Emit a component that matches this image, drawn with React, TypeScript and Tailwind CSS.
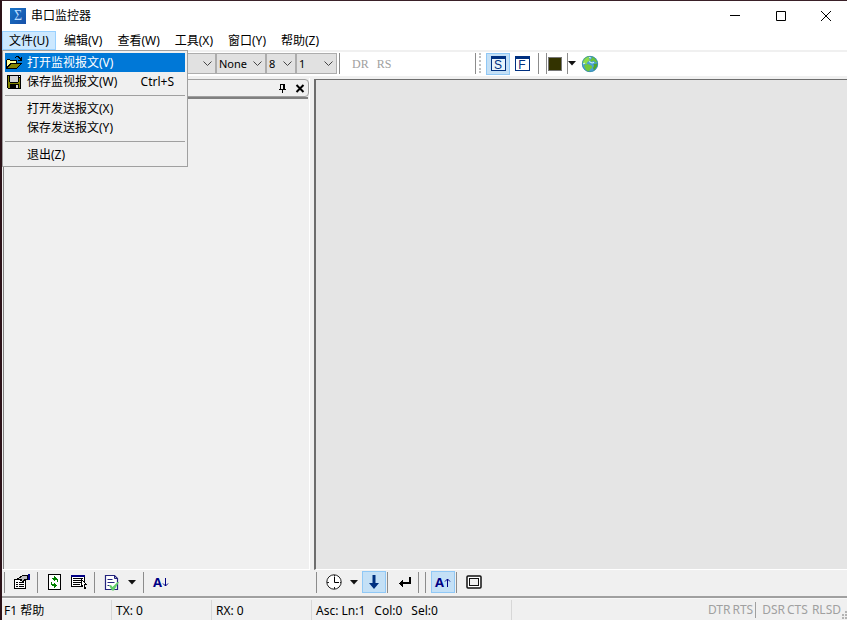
import { useState, type ReactNode } from "react"
import clsx from "clsx"

const menus = ["文件(U)", "编辑(V)", "查看(W)", "工具(X)", "窗口(Y)", "帮助(Z)"]

function OpenIcon() {
  return (
    <svg width="16" height="16" viewBox="0 0 16 16" shapeRendering="crispEdges">
      <path d="M0 14V5h1V4h3v1h7v3h5v1h-1v1h-1v1h-1v1h-1v1h-1v1z" fill="#000" />
      <path d="M1 5h3v1h6v2H4v1H3v1H2v1H1z" fill="#ffff9c" />
      <path d="M5 9h9v1h-1v1h-1v1h-1v1H2v-1h1v-1h1v-1h1z" fill="#848400" />
      <path d="M9 2h1V1h3v1h1v1h1V2h1v4h-4V5h2V4h-1V3h-1V2h-2v1H9z" fill="#000" />
    </svg>
  )
}

function SaveIcon() {
  return (
    <svg width="16" height="16" viewBox="0 0 16 16" shapeRendering="crispEdges">
      <path d="M1 1h14v14H2l-1-1z" fill="#000" />
      <path d="M2 2h1v6h1v1h8V8h1V4h1v10H2z" fill="#848400" />
      <path d="M4 2h8v6H4z" fill="#d4d4d4" />
      <path d="M13 2h1v1h-1z" fill="#fff" />
      <path d="M4 10h9v4H4z" fill="#000" />
      <path d="M10 11h2v3h-2z" fill="#d4d4d4" />
    </svg>
  )
}

function PropertiesIcon() {
  return (
    <svg width="18" height="16" viewBox="0 0 18 16" shapeRendering="crispEdges">
      <path d="M1.5 5.5h11v9h-11z" fill="#fff" stroke="#000" />
      <path d="M4 4h2V3h1V2h2V1h6v5h-3v1h-1v1H9V7H7V6H4z" fill="#000" />
      <path d="M6 4h2V3h1V2h5v3h-3v1h-1v1H9V5H6z" fill="#bdbdbd" />
      <path d="M15 0h2v6h-2z" fill="#000084" />
      <path d="M3 8h2v1H3zm0 2h2v1H3zm0 2h2v1H3zM6 8h5v1H6zm0 2h5v1H6zm0 2h5v1H6z" fill="#000" />
    </svg>
  )
}

function RefreshIcon() {
  return (
    <svg width="14" height="16" viewBox="0 0 14 16" shapeRendering="crispEdges">
      <path d="M.5.5h12v15H.5z" fill="#fff" stroke="#000" />
      <path
        d="M6 2h1v1h1v1h1v1h1v3H9V6H7v1H6V6H5V5H4V4h2zM3 8h1v2h2V9h1v1h1v1h1v1H8v1H7v1H6v-2H4v-1H3z"
        fill="#008000"
      />
    </svg>
  )
}

function ListIcon() {
  return (
    <svg width="18" height="16" viewBox="0 0 18 16" shapeRendering="crispEdges">
      <path d="M1.5 1.5h13v11h-13z" fill="#fff" stroke="#000" />
      <path d="M1 1h14v2H1z" fill="#000084" />
      <path d="M3 4h10v1H3zm0 2h8v1H3zm0 2h8v1H3zm0 2h7v1H3z" fill="#000" />
      <path d="M11 5h1v1h1v1h1v1h1v1h1v1h1v1h-2v2h1v2h-2v-2h-1v-1h-1v1h-1z" fill="#000" />
      <path d="M12 7h1v1h1v1h1v1h-1v4h-1v-3h-1z" fill="#fff" />
    </svg>
  )
}

function CheckPageIcon() {
  return (
    <svg width="16" height="17" viewBox="0 0 16 17">
      <path d="M1.500 1.500h9l3 3v11h-12z" fill="#fff" stroke="#22227c" strokeWidth="1.200" />
      <path d="M10.500 1.500v3h3M3.500 5.500h5M3.500 8.500h7M3.500 11.500h2" fill="none" stroke="#22227c" />
      <path d="M5 11.500l2-.5 1.500 2L13.500 8H15l-5 8.500H8z" fill="#63cf6b" />
    </svg>
  )
}

function ClockIcon() {
  return (
    <svg width="16" height="16" viewBox="0 0 16 16">
      <circle cx="8" cy="8" r="7.200" fill="#fff" stroke="#222" />
      <path d="M8.500 3v5.500H13" fill="none" stroke="#000" />
      <path d="M8.500 1v1.500M8.500 13v2M1 8.500h2M14 8.500h1" stroke="#222" />
    </svg>
  )
}

function DownIcon() {
  return (
    <svg width="12" height="16" viewBox="0 0 12 16">
      <path d="M4.500 1h3v8H11l-5 6-5-6h3.500z" fill="#003080" />
    </svg>
  )
}

function EnterIcon() {
  return (
    <svg width="14" height="12" viewBox="0 0 14 12" shapeRendering="crispEdges">
      <path d="M11 1h2v7H5v3H4v-1H3V9H2V8H1V7h1V6h1V5h1V4h1v2h6z" fill="#000" />
    </svg>
  )
}

function FrameIcon() {
  return (
    <svg width="16" height="14" viewBox="0 0 16 14">
      <rect x="1" y="1" width="14" height="12" rx="1" fill="#fff" stroke="#111" strokeWidth="1.500" />
      <rect x="3.500" y="3.500" width="9" height="7" fill="#f0f0f0" stroke="#111" />
    </svg>
  )
}

function GlobeIcon() {
  return (
    <svg width="18" height="18" viewBox="0 0 18 18">
      <circle cx="9" cy="9" r="8" fill="#4a9fd4" />
      <path d="M1.500 7l2-4 4-2 2 .5-2 2.500 2 1-3 2-1 2-3 0z" fill="#8edc4a" />
      <path d="M10.500 1.500l3.500 1.500 2.500 4-2 .5-2-2-2 1.500-1.500-2 2-1.500z" fill="#6cc436" />
      <path d="M3 10l3.500-1 4 1.500 1 2-2.500 2-1 2.500-3-1.500-1-2.500z" fill="#72c83c" />
      <path d="M12.500 9l4-.5-.5 3-3 4-1-2.500 1-2z" fill="#4fa52a" />
      <path d="M8 6.500l3 1.500 2-.5M2 9l2-1M8 2.500l2 .5" stroke="#d8f7ff" fill="none" />
      <circle cx="9" cy="9" r="7.700" fill="none" stroke="#2f86a0" strokeWidth=".7" />
    </svg>
  )
}

function WindowIcon({ letter }: { letter: string }) {
  return (
    <span className="flex h-[15px] w-[15px] items-center justify-center border border-t-[3px] border-[#003080] bg-white/60 font-['Liberation_Sans'] text-xs leading-3 text-[#003080]">
      {letter}
    </span>
  )
}

function Caret() {
  return (
    <svg width="8" height="5" viewBox="0 0 8 5">
      <path d="M0 0h8L4 4.500z" fill="#111" />
    </svg>
  )
}

function Separator({ className = "ml-[3px] mr-[5px]" }: { className?: string }) {
  return <div className={clsx("h-[21px] w-px shrink-0 bg-[#8c8c8c]", className)} />
}

function ToolButton({ label, active, narrow, children }: {
  label: string
  active?: boolean
  narrow?: boolean
  children: ReactNode
}) {
  return (
    <button
      aria-label={label}
      aria-pressed={active}
      className={clsx(
        "flex shrink-0 items-center justify-center",
        narrow ? "w-4" : "w-6",
        active ? "h-[22px] border border-[#90c8f6] bg-[#c4e0f6]" : "h-6"
      )}
    >
      {children}
    </button>
  )
}

function Combo({ label, options, className }: { label: string; options: string[]; className: string }) {
  return (
    <div className={clsx("relative h-[21px] shrink-0", className)}>
      <select
        aria-label={label}
        className="block h-full w-full appearance-none border border-[#adadad] bg-[#e1e1e1] pl-0.5 text-[11px] leading-4"
      >
        {options.map((o) => (
          <option key={o}>{o}</option>
        ))}
      </select>
      <svg className="pointer-events-none absolute top-2 right-1" width="9" height="6" viewBox="0 0 9 6">
        <path d="M.5.500l4 4 4-4" fill="none" stroke="#444" />
      </svg>
    </div>
  )
}

function MenuEntry({ text, shortcut, icon, selected }: {
  text: string
  shortcut?: string
  icon?: ReactNode
  selected?: boolean
}) {
  return (
    <button
      role="menuitem"
      className={clsx("flex h-[19px] w-full items-center pr-[11px]", selected && "bg-[#0078d7] text-white")}
    >
      <span className="flex w-[22px] shrink-0 items-center pl-px">{icon}</span>
      <span>{text}</span>
      {shortcut && <span className="ml-auto">{shortcut}</span>}
    </button>
  )
}

function FileMenu() {
  return (
    <div
      role="menu"
      className="absolute top-[19px] left-0 z-10 w-[186px] border border-[#a0a0a0] bg-[#f0f0f0] p-0.5"
    >
      <MenuEntry text="打开监视报文(V)" icon={<OpenIcon />} selected />
      <MenuEntry text="保存监视报文(W)" shortcut="Ctrl+S" icon={<SaveIcon />} />
      <hr className="mt-1 mb-[3px] border-[#a0a0a0]" />
      <MenuEntry text="打开发送报文(X)" />
      <MenuEntry text="保存发送报文(Y)" />
      <hr className="mt-1 mb-[3px] border-[#a0a0a0]" />
      <MenuEntry text="退出(Z)" />
    </div>
  )
}

function TitleBar() {
  return (
    <header className="flex h-[30px] shrink-0 items-center bg-white pl-2">
      <span className="flex h-4 w-4 items-center justify-center bg-linear-to-br from-[#1874c8] to-[#1750a8] font-['Liberation_Serif'] text-sm leading-4 text-[#b8dcff]">
        Σ
      </span>
      <h1 className="ml-[5px] flex-1">串口监控器</h1>
      <button aria-label="最小化" className="flex h-full w-[46px] items-center justify-center">
        <svg width="10" height="10" viewBox="0 0 10 10">
          <path d="M0 4.500h10" stroke="#000" />
        </svg>
      </button>
      <button aria-label="最大化" className="flex h-full w-[46px] items-center justify-center">
        <svg width="10" height="10" viewBox="0 0 10 10">
          <path d="M.5.500h9v9h-9z" fill="none" stroke="#000" />
        </svg>
      </button>
      <button aria-label="关闭" className="flex h-full w-[43px] items-center justify-center">
        <svg width="10" height="10" viewBox="0 0 10 10">
          <path d="M0 0l10 10M10 0L0 10" stroke="#000" />
        </svg>
      </button>
    </header>
  )
}

function TopToolbar() {
  return (
    <div className="flex h-7 shrink-0 items-start border-y-2 border-[#f0f0f0] bg-white pt-px">
      <Combo label="端口" options={["COM1"]} className="w-[110px]" />
      <Combo label="波特率" options={["9600"]} className="w-[104px]" />
      <Combo label="校验" options={["None", "Odd", "Even"]} className="w-[50px]" />
      <Combo label="数据位" options={["8", "7"]} className="w-[30px]" />
      <Combo label="停止位" options={["1", "2"]} className="w-[41px]" />
      <Separator className="ml-0.5" />
      <div className="flex h-[21px] w-[132px] items-center gap-2 pl-3 font-['Liberation_Serif'] text-xs text-[#a0a0a0]">
        <button disabled>DR</button>
        <button disabled>RS</button>
      </div>
      <Separator className="ml-[3px] mr-[3px]" />
      <div className="mr-[5px] h-5 border-l-2 border-dotted border-[#c0c0c0]" />
      <div className="flex h-[21px] items-center">
        <ToolButton label="发送窗口" active>
          <WindowIcon letter="S" />
        </ToolButton>
        <ToolButton label="过滤窗口">
          <WindowIcon letter="F" />
        </ToolButton>
        <Separator className="ml-1" />
        <Separator className="ml-[7px]" />
        <button aria-label="颜色" className="ml-px h-[14px] w-[14px] border border-[#777] bg-[#333300]" />
        <Separator className="ml-[5px]" />
        <button aria-label="选择颜色" className="flex h-6 w-2 items-center">
          <Caret />
        </button>
        <button aria-label="网站" className="ml-[5px]">
          <GlobeIcon />
        </button>
      </div>
    </div>
  )
}

function SidePanel() {
  return (
    <aside className="flex w-[308px] shrink-0 flex-col border-r border-b border-white pt-px">
      <div className="flex h-[18px] items-center justify-end gap-2 rounded-sm border border-[#a0a0a0] pr-[3px]">
        <button aria-label="固定">
          <svg width="9" height="9" viewBox="0 0 9 9" shapeRendering="crispEdges">
            <path d="M2 0h5v5h1v1H5v3H4V6H1V5h1zm1 1v4h2V1z" fill="#000" fillRule="evenodd" />
          </svg>
        </button>
        <button aria-label="关闭面板">
          <svg width="10" height="9" viewBox="0 0 10 9">
            <path d="M1.500 1l7 7M8.500 1l-7 7" stroke="#000" strokeWidth="2" />
          </svg>
        </button>
      </div>
      <div className="mr-px ml-px flex-1 border-t-2 border-l border-[#808080]" />
    </aside>
  )
}

function BottomToolbar() {
  return (
    <div className="flex h-[28px] shrink-0 items-start border-b-2 border-[#a0a0a0] pl-0.5">
      <div className="flex w-[309px] shrink-0 items-center">
        <Separator className="mr-[5px]" />
        <ToolButton label="属性"><PropertiesIcon /></ToolButton>
        <Separator />
        <ToolButton label="刷新"><RefreshIcon /></ToolButton>
        <ToolButton label="列表"><ListIcon /></ToolButton>
        <Separator />
        <ToolButton label="校验"><CheckPageIcon /></ToolButton>
        <ToolButton label="校验选项" narrow><Caret /></ToolButton>
        <Separator />
        <ToolButton label="字体减小">
          <span className="font-['Open_Sans'] text-[13px] font-bold text-[#000084]">A</span>
          <svg width="7" height="9" viewBox="0 0 7 9">
            <path d="M3.500 0v8M1 5.500l2.500 2.500L6 5.500" fill="none" stroke="#000084" />
          </svg>
        </ToolButton>
      </div>
      <div className="flex flex-1 items-center pl-[3px]">
        <Separator className="mr-[5px]" />
        <ToolButton label="时间"><ClockIcon /></ToolButton>
        <ToolButton label="时间选项" narrow><Caret /></ToolButton>
        <ToolButton label="滚动" active><DownIcon /></ToolButton>
        <Separator className="mr-[5px] ml-px" />
        <ToolButton label="换行"><EnterIcon /></ToolButton>
        <Separator className="mr-[5px] ml-px" />
        <Separator className="mr-[5px] ml-px" />
        <ToolButton label="字体增大" active>
          <span className="font-['Open_Sans'] text-[13px] font-bold text-[#000084]">A</span>
          <svg width="7" height="9" viewBox="0 0 7 9">
            <path d="M3.500 9V1M1 3.500L3.500 1 6 3.500" fill="none" stroke="#000084" />
          </svg>
        </ToolButton>
        <Separator className="mr-[5px] ml-px" />
        <ToolButton label="全屏"><FrameIcon /></ToolButton>
      </div>
    </div>
  )
}

function StatusBar() {
  return (
    <footer className="flex h-[22px] shrink-0 items-stretch border-t border-[#f8f8f8] pt-px leading-[22px]">
      <div className="w-[110px] border-r border-[#d7d7d7] pl-0.5">F1 帮助</div>
      <div className="w-[100px] border-r border-[#d7d7d7] pl-1">TX: 0</div>
      <div className="w-[100px] border-r border-[#d7d7d7] pl-1">RX: 0</div>
      <div className="flex w-[200px] gap-[9px] border-r border-[#d7d7d7] pl-1">
        <span>Asc: Ln:1</span>
        <span>Col:0</span>
        <span>Sel:0</span>
      </div>
      <div className="ml-auto flex items-center gap-0.5 text-[#a0a0a0]">
        <span>DTR</span>
        <span>RTS</span>
        <div className="mr-1 h-4 w-px bg-[#a0a0a0]" />
        <span>DSR</span>
        <span>CTS</span>
        <span className="ml-0.5">RLSD</span>
      </div>
      <svg className="self-end" width="6" height="9" viewBox="0 0 6 9" shapeRendering="crispEdges">
        <path d="M4 0h2v2H4zM1 3h2v2H1zM4 3h2v2H4zM1 6h2v2H1zM4 6h2v2H4z" fill="#b4b4b4" />
      </svg>
    </footer>
  )
}

export default function App() {
  const [open, setOpen] = useState(0)

  return (
    <div className="flex h-screen flex-col overflow-hidden border-t border-l-2 border-t-[#3a2028] border-l-[#2c1218] bg-[#f0f0f0] font-['Noto_Sans','Noto_Sans_CJK_SC',sans-serif] text-xs leading-4 text-black">
      <TitleBar />
      <nav className="relative flex h-[19px] shrink-0 gap-px bg-white">
        {menus.map((name, i) => (
          <button
            key={name}
            onClick={() => setOpen(open === i ? -1 : i)}
            className={clsx(
              "flex items-center border px-1.5",
              open === i ? "border-[#99d1ff] bg-[#cce8ff]" : "border-transparent"
            )}
          >
            {name}
          </button>
        ))}
        {open === 0 && <FileMenu />}
      </nav>
      <TopToolbar />
      <main className="flex min-h-0 flex-1 gap-1">
        <SidePanel />
        <section className="mt-px flex-1 border-t border-b border-l-2 border-t-[#6d6d6d] border-b-white border-l-[#6d6d6d] bg-[#e5e5e5]" />
      </main>
      <BottomToolbar />
      <StatusBar />
    </div>
  )
}
